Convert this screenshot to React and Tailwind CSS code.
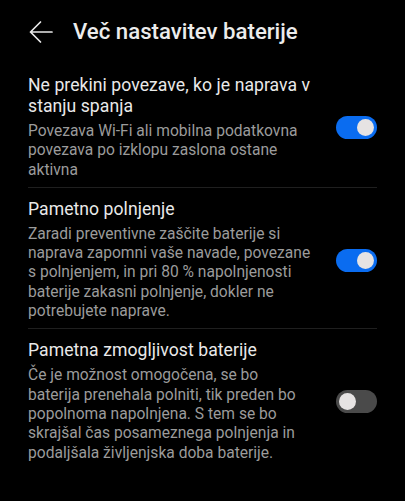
import React, { useState } from 'react';

const items = [
  {
    title: 'Ne prekini povezave, ko je naprava v stanju spanja',
    desc: 'Povezava Wi-Fi ali mobilna podatkovna povezava po izklopu zaslona ostane aktivna',
    on: true,
  },
  {
    title: 'Pametno polnjenje',
    desc: 'Zaradi preventivne zaščite baterije si naprava zapomni vaše navade, povezane s polnjenjem, in pri 80 % napolnjenosti baterije zakasni polnjenje, dokler ne potrebujete naprave.',
    on: true,
  },
  {
    title: 'Pametna zmogljivost baterije',
    desc: 'Če je možnost omogočena, se bo baterija prenehala polniti, tik preden bo popolnoma napolnjena. S tem se bo skrajšal čas posameznega polnjenja in podaljšala življenjska doba baterije.',
    on: false,
  },
];

function Toggle({ on, onChange }) {
  return (
    <button
      onClick={onChange}
      className={
        'relative w-[41px] h-[23px] rounded-full shrink-0 border-none cursor-pointer ' +
        (on ? 'bg-[#0a6cf0]' : 'bg-[#4a4a4a]')
      }
    >
      <span
        className={
          'absolute top-[3px] w-[17px] h-[17px] rounded-full bg-[#e6e3e3] ' +
          (on ? 'right-[3px]' : 'left-[3px]')
        }
      />
    </button>
  );
}

export default function App() {
  const [state, setState] = useState(items.map(i => i.on));

  return (
    <div className="w-[405px] h-[501px] bg-black overflow-hidden font-['Roboto','Noto_Sans',sans-serif]">
      <div className="h-[64px] flex items-center pl-[28px]">
        <svg width="26" height="24" viewBox="0 0 26 24" fill="none" stroke="#e8e8e8" strokeWidth="1.7" strokeLinecap="round" strokeLinejoin="round">
          <path d="M24 12H2.5M12.5 2L2.5 12l10 10" />
        </svg>
        <h1 className="ml-[19px] text-[22.2px] font-medium text-[#ececec]">Več nastavitev baterije</h1>
      </div>

      <div className="px-[28px]">
        {items.map((it, i) => (
          <div
            key={i}
            className={
              'flex items-center gap-[23px] pt-[11px] pb-[7px] ' +
              (i < items.length - 1 ? 'border-b border-[#1f1f1f]' : '')
            }
          >
            <div className="flex-1">
              <div className="text-[17.6px] leading-[21px] tracking-[0.05px] text-[#e9e9e9]">{it.title}</div>
              <div className="mt-[5px] text-[15.6px] leading-[19.3px] text-[#9b9b9b]">{it.desc}</div>
            </div>
            <Toggle on={state[i]} onChange={() => setState(s => s.map((v, j) => (j === i ? !v : v)))} />
          </div>
        ))}
      </div>
    </div>
  );
}
